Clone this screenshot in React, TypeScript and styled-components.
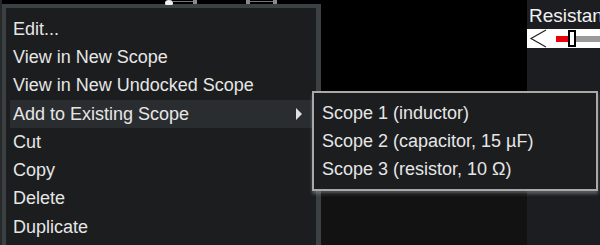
import React from 'react';
import styled, { createGlobalStyle } from 'styled-components';

const GlobalStyle = createGlobalStyle`
  html, body {
    margin: 0;
    padding: 0;
    background: #000;
  }
  body {
    font-family: "Liberation Sans", Arial, sans-serif;
  }
`;

const Screen = styled.div`
  position: relative;
  width: 600px;
  height: 245px;
  overflow: hidden;
  display: flex;
  background: #000;
`;

const LeftEdge = styled.div`
  width: 2px;
  flex-shrink: 0;
  background: #262829;
`;

const Menu = styled.div`
  width: 319px;
  flex-shrink: 0;
  margin-top: 4px;
  height: 260px;
  box-sizing: border-box;
  border: 4px solid #3b4043;
  border-right-width: 5px;
  background: #1b1d1f;
  padding: 7px 4px 0 4px;
`;

const Item = styled.div<{ $active?: boolean }>`
  height: 28.3px;
  display: flex;
  align-items: center;
  padding-left: 3px;
  padding-right: 12px;
  font-size: 18px;
  color: #e6e6e6;
  background: ${({ $active }) => ($active ? '#2a2d30' : 'transparent')};
  white-space: nowrap;
`;

const Label = styled.span`
  flex: 1;
`;

const Arrow = styled.span`
  width: 0;
  height: 0;
  border-top: 6px solid transparent;
  border-bottom: 6px solid transparent;
  border-left: 6px solid #e0e0e0;
  margin-right: -2px;
`;

const Middle = styled.div`
  flex: 1;
  display: flex;
  flex-direction: column;
`;

const Void = styled.div`
  flex: 1;
  background: #000;
`;

const LowerPanel = styled.div`
  height: 50px;
  background: #121212;
`;

const SidePanel = styled.div`
  width: 73px;
  flex-shrink: 0;
  background: #1b1d20;
  overflow: hidden;
  display: flex;
  flex-direction: column;
`;

const SideTitle = styled.div`
  font-size: 19px;
  color: #f2f2f2;
  padding: 5px 0 0 2px;
  height: 29px;
  box-sizing: border-box;
  white-space: nowrap;
  overflow: hidden;
`;

const Slider = styled.div`
  height: 19px;
  background: #fff;
  display: flex;
  align-items: center;
`;

const Track = styled.div`
  flex: 1;
  height: 6px;
  display: flex;
  align-items: center;
`;

const Fill = styled.div<{ $color: string; $w?: number }>`
  height: 6px;
  background: ${({ $color }) => $color};
  ${({ $w }) => ($w ? `width: ${$w}px;` : 'flex: 1;')}
`;

const Thumb = styled.div`
  width: 4px;
  height: 13px;
  border: 2px solid #000;
  background: #fff;
  flex-shrink: 0;
`;

const Submenu = styled.div`
  position: absolute;
  left: 312px;
  top: 91px;
  width: 286px;
  height: 100px;
  box-sizing: border-box;
  border: 2px solid #a9a9a9;
  background: #1b1d1f;
  padding: 6px 0 0 8px;
  box-shadow: 0 3px 3px rgba(140, 140, 140, 0.55);
`;

const SubItem = styled.div`
  height: 28.3px;
  display: flex;
  align-items: center;
  font-size: 18px;
  color: #e6e6e6;
  white-space: nowrap;
`;

const TopMarks = styled.svg`
  position: absolute;
  left: 0;
  top: 0;
`;

const items = [
  'Edit...',
  'View in New Scope',
  'View in New Undocked Scope',
  'Add to Existing Scope',
  'Cut',
  'Copy',
  'Delete',
  'Duplicate',
];

const scopes = [
  'Scope 1 (inductor)',
  'Scope 2 (capacitor, 15 \u00b5F)',
  'Scope 3 (resistor, 10 \u03a9)',
];

export default function App() {
  return (
    <>
      <GlobalStyle />
      <Screen>
        <LeftEdge />
        <Menu>
          {items.map((label, i) => (
            <Item key={label} $active={i === 3}>
              <Label>{label}</Label>
              {i === 3 && <Arrow />}
            </Item>
          ))}
        </Menu>
        <Middle>
          <Void />
          <LowerPanel />
        </Middle>
        <SidePanel>
          <SideTitle>Resistance</SideTitle>
          <Slider>
            <svg width="20" height="19" viewBox="0 0 20 19">
              <path d="M19 1 L4 9.5 L19 18" fill="none" stroke="#222" strokeWidth="1.2" />
            </svg>
            <Track>
              <Fill $color="#fff" $w={9} />
              <Fill $color="#e8000b" $w={12} />
              <Thumb />
              <Fill $color="#9a9a9a" />
            </Track>
          </Slider>
        </SidePanel>
        <TopMarks width="330" height="5" viewBox="0 0 330 5">
          <ellipse cx="169" cy="3" rx="4" ry="3" fill="#f0f0f0" />
          <rect x="172" y="1" width="22" height="1" fill="#777" />
          <rect x="193" y="0" width="4" height="4" fill="#8a8a8a" />
          <rect x="246" y="0" width="4" height="4" fill="#8a8a8a" />
          <rect x="249" y="1" width="25" height="1" fill="#777" />
          <rect x="273" y="0" width="4" height="4" fill="#8a8a8a" />
        </TopMarks>
        <Submenu>
          {scopes.map((s) => (
            <SubItem key={s}>{s}</SubItem>
          ))}
        </Submenu>
      </Screen>
    </>
  );
}
